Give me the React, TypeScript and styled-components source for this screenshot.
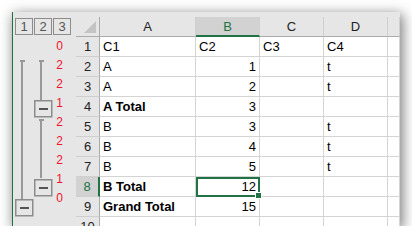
import React from 'react'
import styled, { createGlobalStyle } from 'styled-components'

const GlobalStyle = createGlobalStyle`
  body {
    margin: 0;
    background: #ffffff;
    font-family: "Liberation Sans", Arial, sans-serif;
  }
`

const Window = styled.div`
  margin: 12px 0 0 12px;
  width: 388px;
  height: 214px;
  box-sizing: border-box;
  padding-top: 5px;
  display: flex;
  overflow: hidden;
  background: #e6e6e6;
  border-left: 1px solid #217346;
  box-shadow: 2px 3px 12px 1px rgba(0, 0, 0, 0.5);
`

const OutlinePane = styled.div`
  position: relative;
  width: 63px;
  flex: none;
  display: flex;
  flex-direction: column;
`

const LevelBar = styled.div`
  height: 20px;
  display: flex;
  gap: 1px;
  padding: 1px 0 0 2px;
  box-sizing: border-box;
`

const LevelButton = styled.div`
  width: 18px;
  height: 17px;
  box-sizing: border-box;
  border: 1.5px solid #8c8c8c;
  color: #555;
  font-size: 13px;
  display: flex;
  align-items: center;
  justify-content: center;
`

const LevelDigit = styled.div`
  height: 20px;
  padding-right: 13px;
  display: flex;
  align-items: center;
  justify-content: flex-end;
  color: #f0142d;
  font-size: 12px;
`

const Brackets = styled.svg`
  position: absolute;
  left: 0;
  top: 0;
`

const Sheet = styled.div`
  flex: 1;
  display: grid;
  grid-template-columns: 24px 96px 64px 64px 64px 1fr;
  grid-auto-rows: 20px;
  font-size: 13px;
`

const Corner = styled.div`
  position: relative;
  border-right: 1px solid #ababab;
  border-bottom: 1px solid #ababab;
  &::after {
    content: '';
    position: absolute;
    right: 3px;
    bottom: 3px;
    width: 0;
    height: 0;
    border-left: 12px solid transparent;
    border-bottom: 12px solid #c4c4c4;
  }
`

const ColHeader = styled.div<{ $active?: boolean }>`
  display: flex;
  align-items: center;
  justify-content: center;
  background: ${p => (p.$active ? '#d2d2d2' : '#e6e6e6')};
  color: ${p => (p.$active ? '#217346' : '#222')};
  border-right: 1px solid #d0d0d0;
  border-bottom: ${p => (p.$active ? '2px solid #217346' : '1px solid #ababab')};
`

const RowHeader = styled.div<{ $active?: boolean }>`
  display: flex;
  align-items: center;
  justify-content: center;
  background: ${p => (p.$active ? '#d2d2d2' : '#e6e6e6')};
  color: ${p => (p.$active ? '#217346' : '#222')};
  border-bottom: 1px solid #cfcfcf;
  border-right: ${p => (p.$active ? '2px solid #217346' : '1px solid #ababab')};
`

const Cell = styled.div<{ $num?: boolean; $bold?: boolean; $selected?: boolean }>`
  position: relative;
  display: flex;
  align-items: center;
  justify-content: ${p => (p.$num ? 'flex-end' : 'flex-start')};
  padding: 0 3px;
  box-sizing: border-box;
  background: #ffffff;
  color: #000;
  font-weight: ${p => (p.$bold ? 700 : 400)};
  border-right: 1px solid #d4d4d4;
  border-bottom: 1px solid #d4d4d4;
  white-space: nowrap;
  ${p =>
    p.$selected &&
    `
    outline: 2px solid #217346;
    outline-offset: -2px;
    &::after {
      content: '';
      position: absolute;
      right: -3px;
      bottom: -3px;
      width: 5px;
      height: 5px;
      background: #217346;
      border: 1px solid #fff;
      z-index: 2;
    }
  `}
`

type Row = { level: string; cells: string[]; bold?: boolean }

const rows: Row[] = [
  { level: '0', cells: ['C1', 'C2', 'C3', 'C4'] },
  { level: '2', cells: ['A', '1', '', 't'] },
  { level: '2', cells: ['A', '2', '', 't'] },
  { level: '1', cells: ['A Total', '3', '', ''], bold: true },
  { level: '2', cells: ['B', '3', '', 't'] },
  { level: '2', cells: ['B', '4', '', 't'] },
  { level: '2', cells: ['B', '5', '', 't'] },
  { level: '1', cells: ['B Total', '12', '', ''], bold: true },
  { level: '0', cells: ['Grand Total', '15', '', ''], bold: true },
  { level: '', cells: ['', '', '', ''] },
]

const MinusBox = ({ x, y }: { x: number; y: number }) => (
  <g>
    <rect x={x + 0.75} y={y + 0.75} width={17} height={16} fill="#e6e6e6" stroke="#8c8c8c" strokeWidth={1.5} />
    <rect x={x + 5} y={y + 8} width={9} height={2} fill="#555" />
  </g>
)

const App = () => (
  <>
    <GlobalStyle />
    <Window>
      <OutlinePane>
        <LevelBar>
          <LevelButton>1</LevelButton>
          <LevelButton>2</LevelButton>
          <LevelButton>3</LevelButton>
        </LevelBar>
        {rows.map((r, i) => (
          <LevelDigit key={i}>{r.level}</LevelDigit>
        ))}
        <Brackets width={63} height={210}>
          <g fill="#999">
            <rect x={8} y={43} width={2} height={139} />
            <rect x={7} y={43} width={5} height={2} />
            <rect x={27} y={43} width={2} height={40} />
            <rect x={26} y={43} width={5} height={2} />
            <rect x={27} y={102} width={2} height={59} />
            <rect x={26} y={102} width={5} height={2} />
          </g>
          <MinusBox x={21} y={83} />
          <MinusBox x={21} y={162} />
          <MinusBox x={2} y={182} />
        </Brackets>
      </OutlinePane>
      <Sheet>
        <Corner />
        {['A', 'B', 'C', 'D', ''].map(c => (
          <ColHeader key={c} $active={c === 'B'}>{c}</ColHeader>
        ))}
        {rows.map((r, i) => (
          <React.Fragment key={i}>
            <RowHeader $active={i === 7}>{i + 1}</RowHeader>
            {r.cells.map((v, j) => (
              <Cell
                key={j}
                $num={j === 1 && i > 0}
                $bold={j === 0 && r.bold}
                $selected={i === 7 && j === 1}
              >
                {v}
              </Cell>
            ))}
            <Cell />
          </React.Fragment>
        ))}
      </Sheet>
    </Window>
  </>
)

export default App
